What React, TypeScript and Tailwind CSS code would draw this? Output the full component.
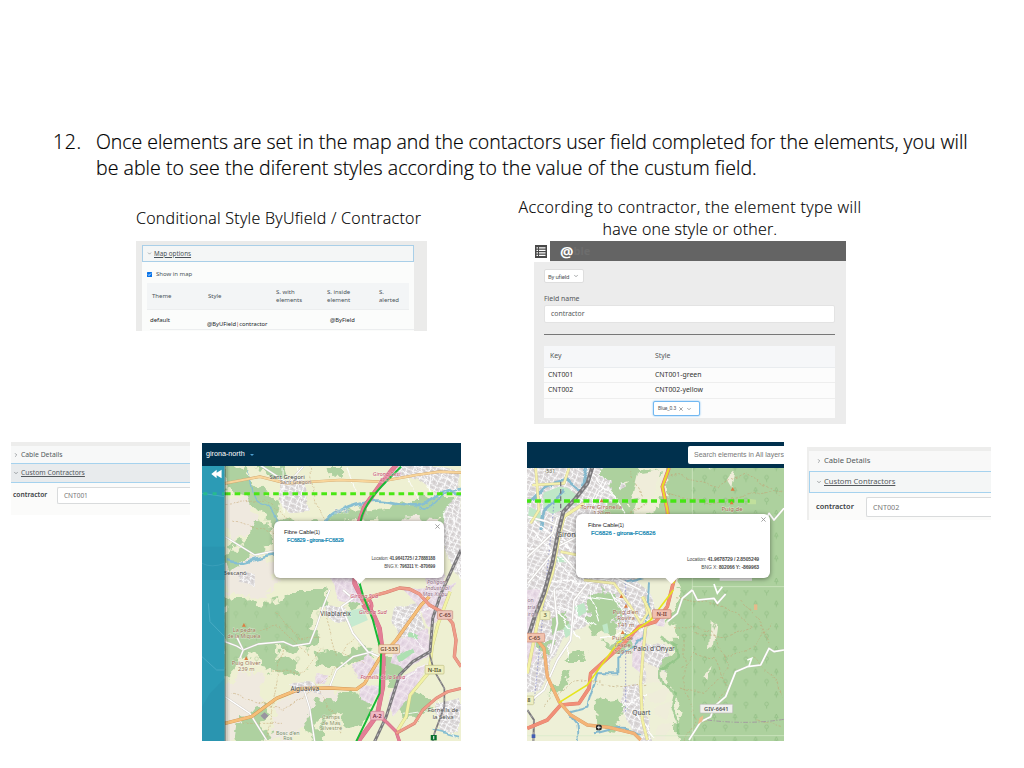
import React from "react";
import { ChevronDown, ChevronRight } from "lucide-react";

type RoadProps = { d: string; c?: string; w?: number; edge?: string; dash?: string };

function Road({ d, c = "#ffffff", w = 5, edge = "#c9c5bf", dash }: RoadProps) {
  return (
    <g fill="none" strokeLinejoin="round">
      <path d={d} stroke={edge} strokeWidth={w + 2} />
      <path d={d} stroke={c} strokeWidth={w} strokeDasharray={dash} />
    </g>
  );
}

function Rail({ d, w = 9 }: { d: string; w?: number }) {
  return (
    <g fill="none" strokeLinejoin="round">
      <path d={d} stroke="#7b797c" strokeWidth={w} />
      <path d={d} stroke="#bdbbbd" strokeWidth={w / 3} strokeDasharray="9 9" />
    </g>
  );
}

type LabelProps = { x: number; y: number; children: string; c?: string; s?: number; i?: boolean };

function Label({ x, y, children, c = "#454545", s = 17, i = false }: LabelProps) {
  return (
    <text
      x={x}
      y={y}
      fill={c}
      fontSize={s}
      fontStyle={i ? "italic" : "normal"}
      textAnchor="middle"
      stroke="#ffffff"
      strokeOpacity={0.5}
      strokeWidth={2.5}
      paintOrder="stroke"
    >
      {children}
    </text>
  );
}

type ShieldProps = { x: number; y: number; w: number; h?: number; fill: string; edge: string; c: string; children: string };

function Shield({ x, y, w, h = 26, fill, edge, c, children }: ShieldProps) {
  return (
    <g>
      <rect x={x} y={y} width={w} height={h} rx={3} fill={fill} stroke={edge} strokeWidth={2} />
      <text x={x + w / 2} y={y + h / 2 + 6} fontSize={17} fontWeight={600} fill={c} textAnchor="middle">
        {children}
      </text>
    </g>
  );
}

function Defs({ id }: { id: string }) {
  return (
    <defs>
      <filter id={id + "-rough"} x="-5%" y="-5%" width="110%" height="110%">
        <feTurbulence type="fractalNoise" baseFrequency="0.028" numOctaves="3" seed="6" result="n" />
        <feDisplacementMap in="SourceGraphic" in2="n" scale="60" xChannelSelector="R" yChannelSelector="G" />
      </filter>
      <filter id={id + "-wavy"} x="-5%" y="-5%" width="110%" height="110%">
        <feTurbulence type="fractalNoise" baseFrequency="0.02" numOctaves="2" seed="3" result="n" />
        <feDisplacementMap in="SourceGraphic" in2="n" scale="24" xChannelSelector="R" yChannelSelector="G" />
      </filter>
      <pattern id={id + "-town"} width="19" height="15" patternUnits="userSpaceOnUse" patternTransform="rotate(24)">
        <rect width="19" height="15" fill="#dbd8d9" />
        <path d="M0 1H19M1 0V15" stroke="#ffffff" strokeWidth="3" />
        <path d="M7 6h6v4h-6z" fill="#cdc7c6" />
      </pattern>
      <pattern id={id + "-works"} width="24" height="17" patternUnits="userSpaceOnUse" patternTransform="rotate(-62)">
        <rect width="24" height="17" fill="#e7d9e5" />
        <path d="M0 1H24M1 0V17" stroke="#f3ebf1" strokeWidth="2.5" />
        <path d="M8 6h9v6h-9z" fill="#dccddb" />
      </pattern>
      <pattern id={id + "-trees"} width="62" height="68" patternUnits="userSpaceOnUse">
        <g fill="none" stroke="#8dbb80" strokeWidth="2">
          <path d="M13 25v-8m-5 0l5-11 5 11z" />
          <circle cx="46" cy="44" r="5.5" />
          <path d="M46 50v8" />
        </g>
      </pattern>
    </defs>
  );
}

const Peak = ({ x, y }: { x: number; y: number }) => <path d={`M${x} ${y - 6}l6 11h-12z`} fill="#db7d42" />;

function NorthMap() {
  return (
    <svg viewBox="6 78 779 825" preserveAspectRatio="none" className="block h-full w-full font-['Noto_Sans',sans-serif]">
      <Defs id="n" />
      <rect x="0" y="70" width="800" height="840" fill="#eef0d2" />
      <g filter="url(#n-rough)">
        <g fill="#efe9df">
          <path d="M80 180L150 160L170 260L100 320L75 280zM70 340L200 350L240 430L180 480L70 450zM75 720L190 700L180 850L90 910L70 910zM250 760L400 735L440 770L370 820L260 900L200 910zM580 230L700 220L720 290L590 260z" />
        </g>
        <g fill="#aed1a0">
          <path d="M80 80L130 75L160 130L215 165L245 225L290 250L350 240L430 215L540 205L620 190L690 165L760 165L770 205L700 240L610 235L540 245L460 240L400 250L330 275L240 275L200 235L165 195L130 160L80 150z" />
          <path d="M170 235L220 260L205 310L150 345L110 385L70 370L80 340L140 300z" />
          <path d="M70 480L150 475L180 510L210 480L250 470L300 450L380 450L385 490L345 520L340 560L370 590L350 625L280 640L245 620L220 650L290 670L300 695L240 700L190 690L170 650L120 640L100 700L70 700z" />
          <path d="M170 75L260 75L270 105L200 115zM390 75L430 75L430 110L395 110zM345 640L400 630L440 650L470 620L530 620L520 650L480 665L410 685L350 675zM430 470L495 465L500 500L450 510zM350 780L410 770L470 750L530 765L520 820L475 860L435 870L430 820L380 830L350 860L380 900L340 910L310 840zM110 850L190 800L210 825L180 865L220 890L190 910L100 910zM555 655L620 655L600 710L560 740zM600 755L660 755L700 795L660 830L610 830zM705 250L760 200L785 240L720 290z" />
        </g>
      </g>
      <path d="M75 475H360V690H75z" fill="url(#n-trees)" opacity=".55" />
      <g filter="url(#n-wavy)">
        <g fill="url(#n-town)">
          <path d="M245 125L315 120L330 215L265 220L240 190zM575 75L720 75L780 90L780 165L710 160L650 115L560 110zM735 205L790 160V430L760 390L725 290zM270 730L345 725L370 760L305 760zM590 500L650 490L680 560L650 600L600 590L580 550zM710 790L785 770V880L715 875zM120 395L165 400L165 435L110 425zM370 495L440 500L445 550L380 540z" />
        </g>
        <g fill="url(#n-works)">
          <path d="M385 400L470 405L500 500L420 475zM610 450L765 430L725 530L690 560L650 490zM590 600L690 560L685 650L620 690L570 675zM600 710L690 670L640 760L580 830L565 790zM450 680L510 640L540 700L480 715zM480 730L545 740L520 795L485 780zM350 700L380 700V725L350 725zM620 250L725 250L735 410L730 450L680 430z" />
        </g>
        <path d="M590 650L640 620L645 635L600 668zM620 580L660 585L655 598L620 594z" fill="#aee0b2" />
      </g>
      <path d="M437 515L490 503L505 540L455 562z" fill="#c6ead0" />
      <g stroke="#c8a978" strokeWidth="1.7" fill="none" strokeDasharray="6 4" filter="url(#n-wavy)">
        <path d="M80 190L200 180L300 270L430 290M100 240L260 300L370 300M330 80L360 230L400 290M230 520L300 600L360 590M120 580L240 560L330 650M250 620L200 900M375 530L410 650M420 680L350 730L430 880M90 760L250 810L330 760M130 850L250 850M470 590L430 640L490 670M220 690L310 700L370 620M520 260L600 300L660 280" />
      </g>
      <g filter="url(#n-wavy)" fill="none">
        <path d="M75 360C130 380 160 350 215 345C260 340 320 330 370 250C430 190 510 175 570 185S660 210 710 170S760 165 790 160" stroke="#87bfd2" strokeWidth="8" />
        <path d="M140 95C170 140 145 175 190 190S225 255 240 280" stroke="#87bfd2" strokeWidth="4" />
        <path d="M660 200C700 230 690 160 790 145M700 870L785 890" stroke="#87bfd2" strokeWidth="5" />
      </g>
      <g stroke="#ffffff" strokeWidth="2.5" fill="none" filter="url(#n-wavy)">
        <path d="M250 80V220M290 80L310 210M440 80L470 150M610 80L655 180M650 75L700 170M690 75V160M590 500L680 650M590 550L700 500M730 210L780 420M750 190L780 310M700 80L780 150M600 720L690 670M610 820L760 800M720 780L770 890" />
      </g>
      <Road d="M75 130L180 110L260 130L420 120L540 125L650 105L720 95L790 98" c="#f8d59b" w={6} edge="#cfa56e" />
      <Road d="M180 75L265 130L310 80M75 290L165 345L260 325" w={4} />
      <Road d="M430 450L460 475L425 500L445 545L460 580L505 635L540 650" w={5} />
      <Road d="M75 605L110 618L130 630L175 612L250 605L280 618L330 610L350 560L370 500L390 450" w={4} />
      <Road d="M110 590L130 630L120 655M75 770L150 820L200 900M310 740L330 805L345 905M390 740L410 690L460 650L520 635" w={4} />
      <Road d="M75 850L155 830L230 775L305 745L390 744L470 748L495 730L540 655L590 600L665 495L690 470" c="#f6bf79" w={8} edge="#c88e51" />
      <Road d="M590 878L620 830L632 765L690 695L698 620L715 555L752 455" c="#f2f2a5" w={8} edge="#c9c787" />
      <Rail d="M525 905L560 830L600 705L640 665L692 635L700 535L725 460L785 330" />
      <Rail d="M690 640L703 690L735 745L735 800L705 880L700 905" w={5} />
      <Road d="M590 75L545 130L495 200L475 255L465 430L490 480L520 520L540 565L551 655L550 740L533 825L515 850L475 905" c="#e37f96" w={12} edge="#d2647f" />
      <Road d="M490 490L520 468L560 457L600 444L630 447L660 462L690 495L735 520L760 550L770 600L765 650L785 680" c="#ef9c8a" w={8} edge="#cf7a69" />
      <Road d="M490 495C500 520 530 510 510 480M535 825L565 850L590 875L600 905" c="#e37f96" w={8} edge="#d2647f" />
      <Road d="M590 880L645 850L670 810L710 775L745 755L785 745" c="#ef9c8a" w={7} edge="#cf7a69" />
      <path d="M605 80C560 125 490 185 482 250L480 430L490 465L520 540L545 635L540 760L470 904" stroke="#18b936" strokeWidth="6" fill="none" />
      <path d="M75 161H790" stroke="#4ae714" strokeWidth="9" strokeDasharray="17 12" />
      <Label x={262} y={117} s={18}>Sant Gregori</Label>
      <Label x={288} y={131} s={16} c="#81716f">Sant Gregori</Label>
      <Label x={562} y={107} s={16} c="#c54866" i>Girona Oest</Label>
      <Label x={555} y={125} s={15} c="#c54866" i>AP-7</Label>
      <Label x={427} y={219} s={15} c="#779fb0" i>Riu Ter</Label>
      <Label x={105} y={406} s={18}>Bescanó</Label>
      <Label x={711} y={431} s={17} c="#967187" i>Polígon</Label>
      <Label x={714} y={449} s={17} c="#967187" i>Industrial</Label>
      <Label x={707} y={468} s={17} c="#967187" i>Mas Xirgu</Label>
      <Label x={494} y={474} c="#c54866" i>Girona Sud</Label>
      <Label x={520} y={523} c="#c54866" i>Girona Sud</Label>
      <Label x={408} y={527} s={19}>Vilablareix</Label>
      <Peak x={132} y={555} />
      <Label x={133} y={577} c="#9b7354">La pedra</Label>
      <Label x={132} y={595} s={16} c="#9b7354">de la Miquela</Label>
      <Peak x={139} y={655} />
      <Label x={139} y={676} c="#9b7354">Puig Oliver</Label>
      <Label x={139} y={693} c="#9b7354">239 m</Label>
      <Label x={315} y={752} s={19}>Aiguaviva</Label>
      <Label x={550} y={716} s={16} c="#c54866" i>Fornells de la Selva</Label>
      <Label x={394} y={837} c="#8e9365">Camps</Label>
      <Label x={394} y={854} c="#8e9365">de Mas</Label>
      <Label x={394} y={871} c="#8e9365">Silvestre</Label>
      <Label x={264} y={885} s={16} c="#718965">Bosc d'en</Label>
      <Label x={264} y={901} s={16} c="#718965">Ros</Label>
      <Label x={731} y={817} s={18}>Fornells de</Label>
      <Label x={731} y={838} s={18}>la Selva</Label>
      <Shield x={714} y={512} w={46} fill="#edc4b9" edge="#c78e82" c="#704238">C-65</Shield>
      <Shield x={538} y={614} w={62} fill="#f5dcc0" edge="#c99d70" c="#735033">GI-533</Shield>
      <Shield x={677} y={676} w={57} fill="#eeeebd" edge="#bfbf85" c="#55552e">N-IIa</Shield>
      <Shield x={513} y={814} w={40} fill="#f0b8c4" edge="#c87b90" c="#73263d">A-2</Shield>
      <path d="M694 885h18v16h-18z" fill="#08712e" />
      <path d="M703 888v10" stroke="#fff" strokeWidth="3" />
      <path d="M182 827l12-10 12 10-12 12z" fill="#9994a0" />
      <rect x="6" y="78" width="68" height="830" fill="#2c9bb5" />
      <path d="M6 160L74 170M25 490L30 545L74 590M6 650L50 690L74 690M6 370Q35 385 74 370" stroke="#57b4cb" strokeWidth="2" fill="none" />
      <path d="M10 161h64" stroke="#27bb8e" strokeWidth="9" strokeDasharray="12 16" />
      <path d="M6 320H74V420H6zM30 760L74 715V903H6V800z" fill="#288eaa" opacity=".45" />
      <path d="M50 89L34 102L50 115V106L65 115V89L50 98z" fill="#ffffff" />
      <rect x="74" y="78" width="4" height="830" fill="#171e20" opacity=".45" />
      <rect x="78" y="78" width="6" height="830" fill="#303c30" opacity=".18" />
      <rect x="84" y="78" width="5" height="830" fill="#303c30" opacity=".08" />
    </svg>
  );
}

function EastMap() {
  return (
    <svg viewBox="9 84 771 819" preserveAspectRatio="none" className="block h-full w-full font-['Noto_Sans',sans-serif]">
      <Defs id="e" />
      <rect x="0" y="70" width="800" height="840" fill="#eef0d7" />
      <g filter="url(#e-wavy)">
        <path d="M-20 60H300L310 160L280 220L330 300L310 390L350 440L390 470V525L350 590L270 570L190 550L120 590L50 750L-20 770z" fill="url(#e-town)" />
        <path d="M300 740L345 730L385 905H350L320 850L285 800zM345 610L425 610L450 690L350 730z" fill="url(#e-town)" />
      </g>
      <g filter="url(#e-rough)" fill="#add19e">
        <path d="M430 70H810V930H475L455 860L470 800L430 740L415 680L460 620L450 560L425 545L460 480L480 440L450 420L390 410L330 340L315 270L355 220L410 200L430 130z" />
        <path d="M210 80L330 70L315 120L270 130L240 115zM320 90L410 80L410 100L340 180L320 230L265 260L235 220L280 160zM200 460L270 460L290 520L260 580L220 590L190 550zM240 610L330 580L340 640L270 640zM215 780L280 770L300 830L275 875L220 860zM45 600L85 600L70 650L35 630zM90 530L135 515L130 560L90 580zM130 640L190 625L170 660L120 660zM90 730L140 700L110 760L80 770zM225 90L250 80L300 170L280 180z" />
      </g>
      <g fill="#bfe7c7">
        <path d="M58 158L80 150L105 140L130 143L158 165L150 195L125 205L85 222L58 205zM15 200L50 215L50 245L12 235zM150 500L180 488L188 515L165 530zM118 565L135 550L150 575L125 595zM235 555L250 550L255 580L240 580zM95 350L125 350L130 367L100 367z" />
      </g>
      <g filter="url(#e-wavy)">
        <path d="M0 450H48L25 550L40 660L0 700zM325 580L365 570L350 700L325 680zM385 520L430 520L420 560L380 555z" fill="url(#e-works)" />
        <g fill="#efedda">
          <path d="M345 100L410 90L390 170L325 180zM350 185L400 180L390 220L325 215zM360 660L430 700L420 735L365 720zM370 755L435 750L415 790L380 785zM395 800L440 790L425 840L390 825zM400 860L445 850L430 900L395 900zM560 540L580 550L570 620L555 630zM545 700L560 680L550 720L535 710zM620 105L635 90L625 145L610 120z" />
        </g>
      </g>
      <path d="M500 84H780V903H510V620H470V450H740V220H500z" fill="url(#e-trees)" />
      <g stroke="#7da5cb" fill="none" filter="url(#e-wavy)">
        <path d="M15 190L70 135L130 120L170 150L190 84M10 195L60 150M120 155L60 210L50 270" stroke="#85b9ce" strokeWidth="8" />
        <path d="M210 880C280 860 310 855 350 880M375 430L370 510L355 590L335 620L280 650L280 700L220 700L205 750L190 800L130 815L160 850L165 905M300 425L360 410" stroke="#85b9ce" strokeWidth="6" />
      </g>
      <g stroke="#c0a778" strokeWidth="2" fill="none" strokeDasharray="7 5" filter="url(#e-wavy)">
        <path d="M440 100L580 140L660 100L780 170M430 160L560 190L650 170L780 150M450 470L600 500L690 560L600 590L510 580M450 560L560 570L620 680L540 760L460 740M470 690L510 640L570 660L610 750L540 850M480 600L480 740L520 840L480 900M690 650L740 700L780 770M600 650L690 620L740 550M650 480L710 550L740 620M320 100L370 190L300 230M220 730L300 740L370 730M700 840L780 860M60 800L140 730L230 720" />
      </g>
      <path d="M410 590L460 620L465 650L405 700L415 735L455 760L445 800L465 840V880" fill="none" stroke="#8ac281" strokeWidth="8" opacity=".7" filter="url(#e-wavy)" />
      <path d="M305 420V820M90 190L30 790" stroke="#7a81cb" strokeWidth="2" strokeDasharray="5 5" fill="none" />
      <path d="M505 84V903M10 887H780M505 440H780" stroke="#d8ecc9" strokeWidth="2" />
      <g stroke="#ffffff" strokeWidth="3.5" fill="none" filter="url(#e-wavy)">
        <path d="M12 230L140 330M15 320L145 360M15 410L190 430M25 270L160 430M80 230L170 380M80 450L270 480M100 500L220 560M60 470L170 600M200 450L230 550M250 430L300 530M270 470L370 550M160 480L130 660M225 590L340 580M290 800L370 760M340 820L390 890M190 90L270 170L300 220M210 200L250 120" />
      </g>
      <Road d="M10 230L70 245L150 280M12 350L85 280L100 230M12 430L100 320L160 290M110 340L190 430L270 410L350 450M190 430L150 480L140 600L100 660L60 750L10 790M90 450L100 550L80 640" w={5} />
      <Road d="M25 135L120 130L135 84M35 84L45 210L20 250M110 335L160 345M180 420L270 430L320 500L350 550L370 520L360 470" c="#f4f1ae" w={6} edge="#cfc78f" />
      <Road d="M355 470L375 510L385 545L365 560L357 640L350 730L355 840L370 900" c="#f3f1a6" w={7} edge="#cfc78f" />
      <Road d="M10 700L40 550L58 480L85 400L105 290L120 230L180 190" c="#f3f1a6" w={8} edge="#cfc78f" />
      <Rail d="M206 78L190 130L155 175L118 215L100 290L85 370L60 460L32 530L10 600" w={12} />
      <Rail d="M10 810L30 840L28 910" w={6} />
      <path d="M110 125V215" stroke="#75757d" strokeWidth="4" strokeDasharray="14 8" />
      <Road d="M435 84L415 140L430 210L450 420L430 500L395 545L345 560L300 610L200 700L195 745L165 790L110 795L70 840L10 865" c="#f18f78" w={9} edge="#dc7c67" />
      <Road d="M40 600L60 625L70 710L105 785L140 825L190 855L255 862L330 880L350 900" c="#f4b477" w={8} edge="#d39a68" />
      <path d="M435 84L415 140L430 210L450 430M448 450L380 540L280 610L190 735L105 788" fill="none" stroke="#e6e51c" strokeWidth="5" />
      <Road d="M780 205L750 240L735 220L715 260L690 240M505 450L520 480L570 475L580 490L605 462M505 450L475 475L460 520L430 545M780 630L750 635L735 625L710 675L670 680L635 695L605 770L570 800L560 830L530 845L495 900" w={5} edge="#bbc6ae" />
      <path d="M670 660L683 655L675 678M570 432L580 460L595 440" stroke="#ffffff" strokeWidth="5" fill="none" />
      <path d="M550 840Q670 855 780 838" stroke="#a39aa0" strokeWidth="3" strokeDasharray="14 5 3 5" fill="none" />
      <path d="M674 176l22 3v14h-25z" fill="#c0df9c" />
      <path d="M9 183H677" stroke="#45e514" strokeWidth="10" strokeDasharray="18 11" strokeDashoffset="5" />
      <Label x={78} y={98} s={16} c="#62603c">-531</Label>
      <Label x={133} y={291} s={22}>Girona</Label>
      <Peak x={233} y={182} />
      <Label x={232} y={206} s={18} c="#a6654b">Torre Gironella</Label>
      <Label x={234} y={226} s={18} c="#a6654b">120 m</Label>
      <Peak x={626} y={147} />
      <Peak x={623} y={188} />
      <Label x={624} y={212} s={18} c="#a6654b">Puig de</Label>
      <Peak x={292} y={469} />
      <Peak x={306} y={498} />
      <Label x={305} y={521} s={18} c="#9b6752">Puig d'en</Label>
      <Label x={306} y={541} s={18} c="#9b6752">Rovira</Label>
      <Label x={306} y={561} s={18} c="#9b6752">141 m</Label>
      <Peak x={296} y={577} />
      <Label x={296} y={601} s={18} c="#9b6752">Puig de</Label>
      <Label x={296} y={621} s={18} c="#9b6752">l'Aspe</Label>
      <Label x={296} y={641} s={18} c="#9b6752">129 m</Label>
      <Label x={390} y={634} s={20}>Palol d'Onyar</Label>
      <Label x={352} y={824} s={20}>Quart</Label>
      <Label x={20} y={487} s={15} c="#886e84">on</Label>
      <Label x={25} y={507} s={15} c="#886e84">trial</Label>
      <Label x={25} y={528} s={15} c="#886e84">irgu</Label>
      <Shield x={0} y={580} w={62} fill="#f1c2ae" edge="#ce8c76" c="#6c4839">C-65</Shield>
      <Shield x={385} y={509} w={56} fill="#f0c0b0" edge="#cb806e" c="#7a4139">N-II</Shield>
      <Shield x={528} y={793} w={98} fill="#f0f0ed" edge="#bbbbb6" c="#555555">GIV-6641</Shield>
      <Shield x={48} y={513} w={30} fill="#eeeec0" edge="#c2c290" c="#606040">3</Shield>
      <Shield x={0} y={768} w={29} fill="#eeeec0" edge="#c2c290" c="#606040">8</Shield>
      <rect x="587" y="400" width="97" height="22" fill="#e9e9e7" />
      <rect x="216" y="854" width="17" height="17" rx="5" fill="#262626" />
      <path d="M219 862h11M224.5 857v11" stroke="#ffffff" strokeWidth="2.5" />
      <rect x="690" y="493" width="10" height="17" fill="#e5ba8b" />
      <path d="M526 834l12-8-3 18-13 9z" fill="#e9bd8d" />
      <path d="M23 883h11v11h-11z" fill="#425db2" />
    </svg>
  );
}

type PopupProps = { place: string; cable: string; cableClass: string; lat: string; bng: string; tail: string; pad: string };

function Popup({ place, cable, cableClass, lat, bng, tail, pad }: PopupProps) {
  return (
    <div className={"absolute rounded-md bg-white font-['Liberation_Sans',sans-serif] text-[5px] leading-[7px] tracking-[-0.12px] text-[#4b4b4b] shadow-[0_1px_5px_rgba(0,0,0,0.45)] " + place}>
      <div className={"flex h-full flex-col pt-[7px] " + pad}>
        <div className="text-[6px] leading-[8px] tracking-[-0.1px] text-[#222]">Fibre Cable<span className="text-[5px]">(1)</span></div>
        <div className={"whitespace-nowrap pl-[3px] leading-[9px] text-[#087fae] [-webkit-text-stroke:0.2px_#087fae] " + cableClass}>{cable}</div>
        <div className="mt-auto whitespace-nowrap text-right leading-[8px]">Location: <b>{lat}</b></div>
        <div className="whitespace-nowrap pb-[7px] text-right leading-[8px]">BNG X: <b>{bng}</b></div>
      </div>
      <svg viewBox="0 0 6 6" className="absolute right-[4px] top-[3px] size-[5px]"><path d="M.5 .5l5 5m0-5l-5 5" stroke="#909090" /></svg>
      <svg viewBox="0 0 14 7" className={"absolute top-full h-[6px] w-[13px] " + tail}><path d="M0 0H14L7 7z" fill="#fff" /></svg>
    </div>
  );
}

function MapOptions() {
  return (
    <section className="h-[90px] w-[291px] bg-[#ebebea] px-[6px] pt-[4px] font-['Noto_Sans',sans-serif] text-[6px] font-normal text-[#4a5258]">
      <div className="h-[86px] w-[272px] bg-[#fbfcfb]">
        <div className="flex h-[17px] items-center gap-[2px] border border-[#a9cfe8] bg-[#f4f6f6] pl-[4px] text-[6.3px]">
          <ChevronDown className="size-[5px]" />
          <span className="underline">Map options</span>
        </div>
        <div className="flex h-[21px] items-center gap-[4px] pl-[5px] pt-[4px] text-[6px]">
          <svg viewBox="0 0 10 10" className="size-[5px]"><rect width="10" height="10" rx="1" fill="#0873e8" /><path d="M2 5l2 2 4-4" stroke="#fff" strokeWidth="1.7" fill="none" /></svg>
          <span>Show in map</span>
        </div>
        <div className="mx-[5px] grid h-[27px] grid-cols-[56px_68px_51px_52px_34px] items-center border-b border-[#eceeef] bg-[#f3f5f6] pl-[5px] leading-[8.4px]">
          <span>Theme</span><span>Style</span><span>S. with<br />elements</span><span>S. inside<br />element</span><span>S.<br />alerted</span>
        </div>
        <div className="ml-[8px] grid h-[20px] grid-cols-[57px_123px_60px] border-b border-[#eceeef] text-[#202428]">
          <span className="pt-[6px]">default</span>
          <span className="pt-[10px] text-[5.8px]">@ByUField<span className="text-[#983443]">|</span>contractor</span>
          <span className="pt-[6px] text-[5.8px]">@ByField</span>
        </div>
      </div>
    </section>
  );
}

function StyleEditor() {
  return (
    <section className="flex h-[183px] w-[312px] flex-col bg-[#ececec] font-['Noto_Sans',sans-serif] font-normal text-[#55585a]">
      <header className="flex h-[20px] shrink-0 items-center bg-[#646464]">
        <div className="flex h-[22px] w-[16px] items-center bg-white pl-[1px]">
          <svg viewBox="0 0 12 13" className="h-[13px] w-[12px]"><path d="M0 0h12v13H0z" fill="#484848" /><path d="M1.5 2.8H3M1.5 5.3H3M1.5 7.8H3M1.5 10.3H3M4 2.8h6.5M4 5.3h6.5M4 7.8h6.5M4 10.3h6.5" stroke="#fff" strokeWidth="1.3" /></svg>
        </div>
        <b className="ml-[10px] font-['Open_Sans',sans-serif] text-[15px] leading-[18px] text-white">@</b>
        <span className="text-[11px] font-bold text-[#6d6d6d]">ble</span>
      </header>
      <div className="flex grow flex-col pl-[10px] pr-[11px] pt-[8px]">
        <div className="flex h-[14px] w-[40px] items-center justify-between rounded-[2px] border border-[#dedede] bg-white pl-[3px] pr-[4px] font-['Roboto',sans-serif] text-[6px] tracking-[-0.2px]">By ufield<ChevronDown className="size-[6px]" /></div>
        <div className="mt-[10px] h-[12px] text-[6.9px] leading-[12px]">Field name</div>
        <div className="flex h-[18px] items-center rounded-[2px] border border-[#e3e3e3] bg-white pl-[6px] text-[6.9px]">contractor</div>
        <div className="mt-[11px] h-px bg-[#777]" />
        <div className="mt-[11px] bg-[#fcfcfc]">
          <div className="grid h-[22px] grid-cols-[105px_1fr] items-center border-b border-[#e9ecef] bg-[#f6f7f9] pl-[6px] text-[6.9px]"><span>Key</span><span>Style</span></div>
          <div className="grid h-[15px] grid-cols-[107px_1fr] items-center border-b border-[#eee] pl-[4px] text-[6.9px] text-[#333]"><span>CNT001</span><span>CNT001-green</span></div>
          <div className="grid h-[16px] grid-cols-[107px_1fr] items-center border-b border-[#eee] pl-[4px] text-[6.9px] text-[#333]"><span>CNT002</span><span>CNT002-yellow</span></div>
          <div className="flex h-[19px] items-center pl-[109px]">
            <div className="flex h-[15px] w-[47px] items-center gap-[3px] rounded-[2px] border border-[#72b8f1] bg-white pl-[4px] font-['Roboto',sans-serif] text-[5px] tracking-[-0.1px] shadow-[0_0_2px_#72b8f1]">Blue_0.3<svg viewBox="0 0 6 6" className="size-[4px]"><path d="M.5 .5l5 5m0-5l-5 5" stroke="#777" /></svg><ChevronDown className="size-[6px]" /></div>
          </div>
        </div>
      </div>
    </section>
  );
}

function FirstDetails() {
  return (
    <section className="h-[73px] w-[179px] shrink-0 overflow-hidden bg-[#fbfbfa] font-['Noto_Sans',sans-serif] text-[6.8px] text-[#53585c]">
      <div className="h-[4px] bg-[#ededec]" />
      <div className="flex h-[17px] items-center gap-[2px] bg-[#f7f8f8] pl-[2px] pt-[1px]"><ChevronRight className="size-[6px]" />Cable Details</div>
      <div className="flex h-[20px] items-center gap-[2px] border-y border-[#a5d2ee] bg-[#e8ebed] pl-[2px]"><ChevronDown className="size-[6px]" /><span className="underline">Custom Contractors</span></div>
      <div className="flex items-center gap-[9px] pl-[2px] pt-[4px]"><b className="w-[35px] whitespace-nowrap text-[6.7px] font-semibold text-[#3d4246]">contractor</b><div className="flex h-[17px] grow items-center rounded-l-[2px] border border-r-0 border-[#d9dbdc] bg-white pl-[6px] text-[6.5px] text-[#777]">CNT001</div></div>
    </section>
  );
}

function SecondDetails() {
  return (
    <section className="mt-[5px] h-[73px] w-[184px] shrink-0 overflow-hidden border-l-2 border-[#eeeeed] bg-[#fbfbfa] font-['Noto_Sans',sans-serif] text-[7.6px] text-[#53585c]">
      <div className="h-[4px] bg-[#ededec]" />
      <div className="flex h-[20px] items-center gap-[2px] bg-[#f8f8f8] pl-[7px]"><ChevronRight className="size-[6px]" />Cable Details</div>
      <div className="flex h-[22px] items-center gap-[2px] border border-r-0 border-[#a5d2ee] bg-[#f4f6f6] pl-[6px]"><ChevronDown className="size-[6px]" /><span className="underline">Custom Contractors</span></div>
      <div className="flex items-center gap-[10px] pl-[7px] pt-[4px]"><b className="w-[40px] whitespace-nowrap text-[7.4px] font-semibold text-[#3d4246]">contractor</b><div className="flex h-[20px] grow items-center rounded-l-[2px] border border-r-0 border-[#d9dbdc] bg-white pl-[6px] text-[7.2px] text-[#777]">CNT002</div></div>
    </section>
  );
}

export default function App() {
  return (
    <main className="flex h-[768px] w-[1024px] flex-col overflow-hidden bg-white pt-[129px] font-['Open_Sans',sans-serif] font-light text-black">
      <div className="flex h-[68px] shrink-0 pl-[53px] text-[19.5px] leading-[26px] [-webkit-text-stroke:0.2px_#000]">
        <span className="w-[43px] tracking-[0.6px]">12.</span>
        <p className="whitespace-nowrap"><span className="tracking-[-0.03px]">Once elements are set in the map and the contactors user field completed for the elements, you will</span><br /><span className="tracking-[0.06px]">be able to see the diferent styles according to the value of the custum field.</span></p>
      </div>
      <div className="flex h-[245px] shrink-0 pl-[136px]">
        <div className="w-[291px] pt-[10px]">
          <h2 className="mb-[12px] whitespace-nowrap text-[16px] leading-[22px] tracking-[0.28px] [-webkit-text-stroke:0.15px_#000]">Conditional Style ByUfield / Contractor</h2>
          <MapOptions />
        </div>
        <div className="ml-[77px] flex w-[372px] flex-col items-center">
          <h2 className="-mt-px mb-px h-[44px] whitespace-nowrap text-center text-[16px] leading-[22px] tracking-[0.38px] [-webkit-text-stroke:0.15px_#000]">According to contractor, the element type will<br /><span className="tracking-[0.22px]">have one style or other.</span></h2>
          <StyleEditor />
        </div>
      </div>
      <div className="flex shrink-0 items-start pl-[11px] font-normal">
        <FirstDetails />
        <section className="relative ml-[12px] mt-px flex h-[298px] w-[259px] shrink-0 flex-col">
          <header className="flex h-[23px] shrink-0 items-center gap-[5px] bg-[#00304d] pl-[4px] font-['Liberation_Sans',sans-serif] text-[7.2px] text-white">girona-north<span className="size-0 border-x-2 border-t-2 border-x-transparent border-t-[#4d9ed0]" /></header>
          <div className="min-h-0 flex-1"><NorthMap /></div>
          <Popup place="left-[72px] top-[78px] h-[57px] w-[170px]" cable="FC6829 - girona-FC6829" cableClass="text-[5.4px] tracking-[-0.15px]" lat="41.9641725 / 2.7888188" bng="796311 Y: -870699" tail="left-[79px]" pad="pl-[10px] pr-[9px] [&>*:nth-child(n+3)]:text-[4.5px] [&>*:nth-child(n+3)]:tracking-[-0.15px]" />
        </section>
        <section className="relative ml-[66px] flex h-[299px] w-[257px] shrink-0 flex-col overflow-hidden">
          <header className="flex h-[26px] shrink-0 items-center bg-[#00304d] pl-[161px]"><div className="flex h-[18px] w-[110px] shrink-0 items-center whitespace-nowrap rounded-[2px] bg-white pl-[6px] font-['Liberation_Sans',sans-serif] text-[7px] text-[#777]">Search elements in All layers</div></header>
          <div className="min-h-0 flex-1"><EastMap /></div>
          <Popup place="left-[49px] top-[72px] h-[64px] w-[194px]" cable="FC6826 - girona-FC6826" cableClass="text-[6px] tracking-[-0.1px]" lat="41.9678729 / 2.8505249" bng="802066 Y: -869963" tail="left-[89px]" pad="pl-[12px] pr-[11px]" />
        </section>
        <div className="ml-[23px]"><SecondDetails /></div>
      </div>
    </main>
  );
}
